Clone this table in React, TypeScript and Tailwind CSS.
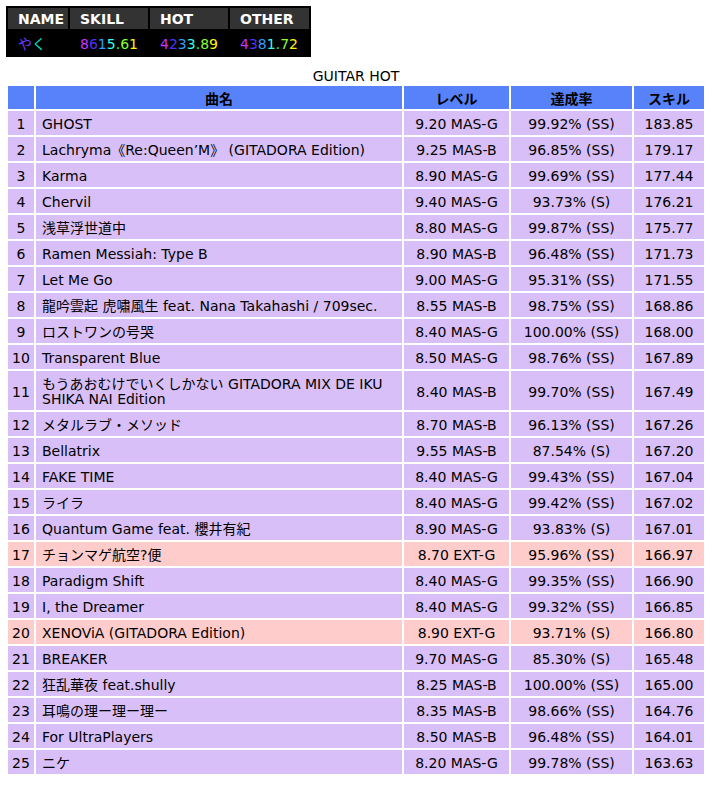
import React from "react";

type Row = [string, string, string, string, boolean?];

const rows: Row[] = [
  ["GHOST", "9.20 MAS-G", "99.92% (SS)", "183.85"],
  ["Lachryma《Re:Queen’M》 (GITADORA Edition)", "9.25 MAS-B", "96.85% (SS)", "179.17"],
  ["Karma", "8.90 MAS-G", "99.69% (SS)", "177.44"],
  ["Chervil", "9.40 MAS-G", "93.73% (S)", "176.21"],
  ["浅草浮世道中", "8.80 MAS-G", "99.87% (SS)", "175.77"],
  ["Ramen Messiah: Type B", "8.90 MAS-B", "96.48% (SS)", "171.73"],
  ["Let Me Go", "9.00 MAS-G", "95.31% (SS)", "171.55"],
  ["龍吟雲起 虎嘯風生 feat. Nana Takahashi / 709sec.", "8.55 MAS-B", "98.75% (SS)", "168.86"],
  ["ロストワンの号哭", "8.40 MAS-G", "100.00% (SS)", "168.00"],
  ["Transparent Blue", "8.50 MAS-G", "98.76% (SS)", "167.89"],
  ["もうあおむけでいくしかない GITADORA MIX DE IKU SHIKA NAI Edition", "8.40 MAS-B", "99.70% (SS)", "167.49"],
  ["メタルラブ・メソッド", "8.70 MAS-B", "96.13% (SS)", "167.26"],
  ["Bellatrix", "9.55 MAS-B", "87.54% (S)", "167.20"],
  ["FAKE TIME", "8.40 MAS-G", "99.43% (SS)", "167.04"],
  ["ライラ", "8.40 MAS-G", "99.42% (SS)", "167.02"],
  ["Quantum Game feat. 櫻井有紀", "8.90 MAS-G", "93.83% (S)", "167.01"],
  ["チョンマゲ航空?便", "8.70 EXT-G", "95.96% (SS)", "166.97", true],
  ["Paradigm Shift", "8.40 MAS-G", "99.35% (SS)", "166.90"],
  ["I, the Dreamer", "8.40 MAS-G", "99.32% (SS)", "166.85"],
  ["XENOViA (GITADORA Edition)", "8.90 EXT-G", "93.71% (S)", "166.80", true],
  ["BREAKER", "9.70 MAS-G", "85.30% (S)", "165.48"],
  ["狂乱華夜 feat.shully", "8.25 MAS-B", "100.00% (SS)", "165.00"],
  ["耳鳴の理ー理ー理ー", "8.35 MAS-B", "98.66% (SS)", "164.76"],
  ["For UltraPlayers", "8.50 MAS-B", "96.48% (SS)", "164.01"],
  ["ニケ", "8.20 MAS-G", "99.78% (SS)", "163.63"],
];

function Rainbow({ text, colors }: { text: string; colors?: string[] }) {
  const chars = Array.from(text);
  const n = chars.length;
  return (
    <>
      {chars.map((c, i) => {
        const color = colors
          ? colors[i]
          : `hsl(${285 - (n > 1 ? (i * 227) / (n - 1) : 0)}, 100%, ${i === n - 1 ? 50 : 60}%)`;
        return (
          <span key={i} style={{ color }}>
            {c}
          </span>
        );
      })}
    </>
  );
}

export default function App() {
  const font = "font-['DejaVu_Sans','Noto_Sans_CJK_JP',sans-serif]";
  return (
    <div className={`${font} text-[14px] text-black bg-white min-h-[787px] pt-[6px]`}>
      <table className="ml-[6px] bg-black border-separate border-spacing-[2px]">
        <thead>
          <tr>
            <th className="w-[60px] bg-[#333333] text-white font-bold text-left pl-[10px] pt-[3px] pb-[1px] leading-[17px]">NAME</th>
            <th className="w-[78px] bg-[#333333] text-white font-bold text-left pl-[10px] pt-[3px] pb-[1px] leading-[17px]">SKILL</th>
            <th className="w-[78px] bg-[#333333] text-white font-bold text-left pl-[10px] pt-[3px] pb-[1px] leading-[17px]">HOT</th>
            <th className="w-[79px] bg-[#333333] text-white font-bold text-left pl-[10px] pt-[3px] pb-[1px] leading-[17px]">OTHER</th>
          </tr>
        </thead>
        <tbody>
          <tr>
            <td className="pl-[10px] pt-[4px] pb-[2px] leading-[18px]">
              <Rainbow text="やく" colors={["#6a3cff", "#00e0c8"]} />
            </td>
            <td className="pl-[10px] pt-[4px] pb-[2px] leading-[18px]">
              <Rainbow text="8615.61" />
            </td>
            <td className="pl-[10px] pt-[4px] pb-[2px] leading-[18px]">
              <Rainbow text="4233.89" />
            </td>
            <td className="pl-[10px] pt-[4px] pb-[2px] leading-[18px]">
              <Rainbow text="4381.72" />
            </td>
          </tr>
        </tbody>
      </table>

      <table className="ml-[6px] mt-[10px] w-[700px] table-fixed border-separate border-spacing-[2px]">
        <caption className="pt-[1px] leading-[16px] text-center">GUITAR HOT</caption>
        <thead>
          <tr className="bg-[#5882fa]">
            <th className="w-[26px] pt-[4px] pb-[1px] leading-[18px] font-bold"></th>
            <th className="w-[366px] pt-[4px] pb-[1px] leading-[18px] font-bold text-center">曲名</th>
            <th className="w-[105px] pt-[4px] pb-[1px] leading-[18px] font-bold text-center">レベル</th>
            <th className="w-[121px] pt-[4px] pb-[1px] leading-[18px] font-bold text-center">達成率</th>
            <th className="w-[70px] pt-[4px] pb-[1px] leading-[18px] font-bold text-center">スキル</th>
          </tr>
        </thead>
        <tbody>
          {rows.map((r, i) => {
            const bg = r[4] ? "bg-[#ffcccc]" : "bg-[#d9bff7]";
            const cell = `${bg} pt-[6px] pb-[3px] leading-[15px]`;
            return (
              <tr key={i}>
                <td className={`${cell} text-center`}>{i + 1}</td>
                <td className={`${cell} text-left pl-[6px] pr-[4px]`}>{r[0]}</td>
                <td className={`${cell} text-center`}>{r[1]}</td>
                <td className={`${cell} text-center`}>{r[2]}</td>
                <td className={`${cell} text-center`}>{r[3]}</td>
              </tr>
            );
          })}
        </tbody>
      </table>
    </div>
  );
}
